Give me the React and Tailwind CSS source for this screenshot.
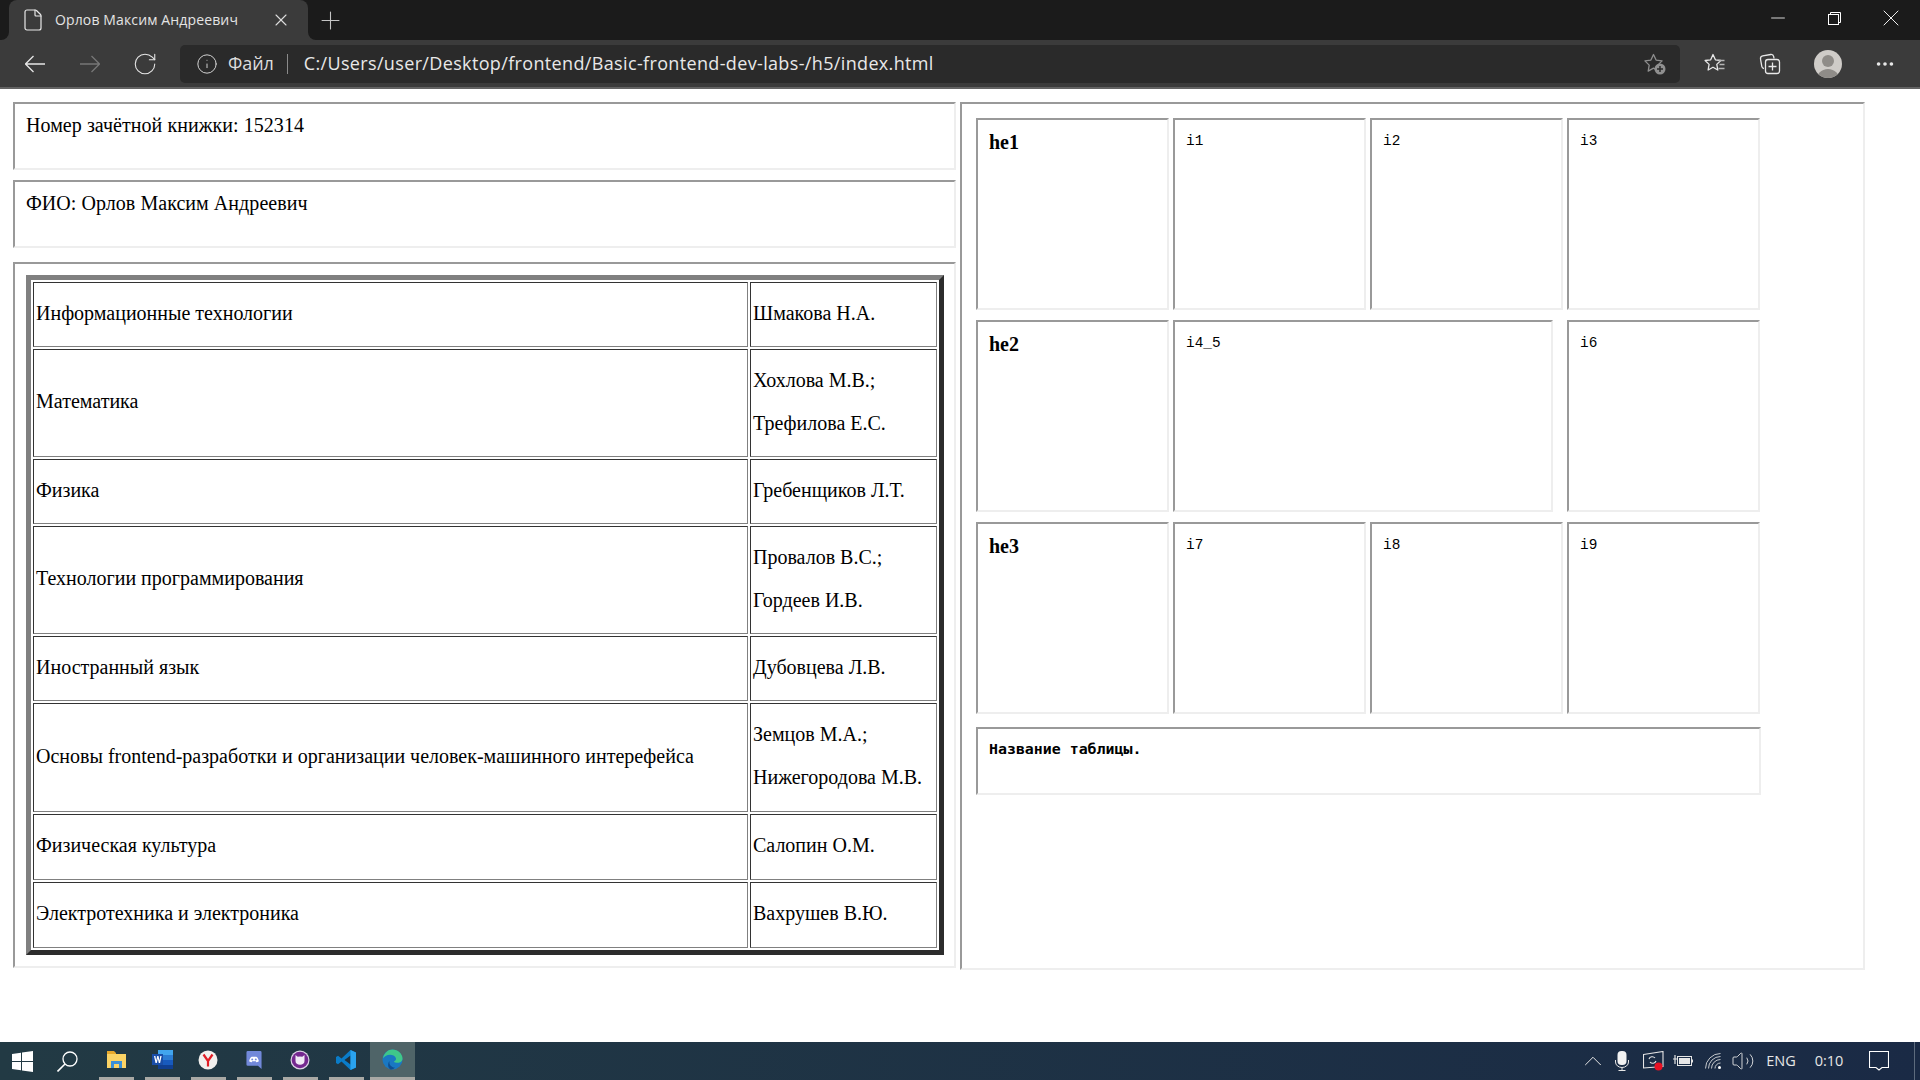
import { X, Plus, Minus, RotateCw, Info, File, MoreHorizontal, ChevronUp, Volume2 } from 'lucide-react';

const serif = "font-['Liberation_Serif','Times_New_Roman',serif]";
const inset = 'border-2 border-t-[#999999] border-l-[#999999] border-r-[#eeeeee] border-b-[#eeeeee]';
const cellBorder = 'border border-t-[#333333] border-l-[#333333] border-r-[#808080] border-b-[#808080]';

const rows = [
  { subject: 'Информационные технологии', teachers: ['Шмакова Н.А.'], height: 'h-[65px]' },
  { subject: 'Математика', teachers: ['Хохлова М.В.;', 'Трефилова Е.С.'], height: 'h-[108px]' },
  { subject: 'Физика', teachers: ['Гребенщиков Л.Т.'], height: 'h-[65px]' },
  { subject: 'Технологии программирования', teachers: ['Провалов В.С.;', 'Гордеев И.В.'], height: 'h-[108px]' },
  { subject: 'Иностранный язык', teachers: ['Дубовцева Л.В.'], height: 'h-[65px]' },
  { subject: 'Основы frontend-разработки и организации человек-машинного интерефейса', teachers: ['Земцов М.А.;', 'Нижегородова М.В.'], height: 'h-[109px]' },
  { subject: 'Физическая культура', teachers: ['Салопин О.М.'], height: 'h-[66px]' },
  { subject: 'Электротехника и электроника', teachers: ['Вахрушев В.Ю.'], height: 'h-[66px]' },
];

function TitleBar() {
  return (
    <div className="h-10 bg-[#3b3b3b] flex text-white shrink-0">
      <div className="w-[9px] bg-[#1b1b1b] rounded-br-lg" />
      <div className="w-[299px] bg-[#1b1b1b]">
        <div className="h-10 bg-[#3b3b3b] rounded-t-lg flex items-center pl-[12px]">
          <File size={24} strokeWidth={1.2} className="text-[#e8e8e8]" />
          <span className="ml-[10px] w-[216px] pb-px text-[14px] text-[#e4e4e4] font-['Open_Sans',sans-serif] tracking-[0.13px]">Орлов Максим Андреевич</span>
          <X size={20} strokeWidth={1.3} className="text-[#dddddd]" />
        </div>
      </div>
      <div className="flex-1 bg-[#1b1b1b] rounded-bl-lg flex items-start">
        <Plus size={29} strokeWidth={0.9} className="ml-[8px] mt-[6px] text-[#c4c4c4]" />
        <div className="ml-auto flex items-start">
          <div className="w-[56px] h-9 flex items-center justify-center"><Minus size={22} strokeWidth={0.9} /></div>
          <div className="w-[56px] h-9 flex items-center justify-center">
            <svg width="13" height="13" viewBox="0 0 13 13" fill="none" stroke="#ffffff">
              <rect x="0.5" y="2.5" width="10" height="10" />
              <path d="M2.5 2.5V0.5H12.5V10.5H10.5" />
            </svg>
          </div>
          <div className="w-[58px] h-9 flex items-center justify-center"><X size={28} strokeWidth={0.8} /></div>
        </div>
      </div>
    </div>
  );
}

function ToolBar() {
  return (
    <div className="h-[49px] bg-[#3b3b3b] border-b-2 border-[#636363] flex items-start shrink-0 text-white">
      <div className="w-[180px] h-[47px] flex items-center pl-[25px]">
        <svg width="20" height="20" viewBox="0 0 20 20" fill="none" stroke="#e6e6e6" strokeWidth="1.300">
          <path d="M.5 10H20M8.500 2L.5 10l8 8" />
        </svg>
        <svg width="20" height="20" viewBox="0 0 20 20" className="ml-[35px]" fill="none" stroke="#777777" strokeWidth="1.300">
          <path d="M19.500 10H0M11.500 2l8 8-8 8" />
        </svg>
        <RotateCw size={26} strokeWidth={1} className="ml-[32px] text-[#e6e6e6]" />
      </div>
      <div className="mt-[5px] w-[1500px] h-[38px] bg-[#2a2a2a] rounded-[5px] flex items-center pl-[16px] text-[18px] font-['Open_Sans',sans-serif] tracking-[0.35px]">
        <Info size={22} strokeWidth={1} className="text-[#e0e0e0]" />
        <span className="ml-[10px] pb-[2px] text-[#dcdcdc] tracking-[-0.1px]">Файл</span>
        <span className="ml-[13px] w-px h-5 bg-[#8a8a8a]" />
        <span className="ml-[16px] pb-[2px] text-[#e8e8e8]">C:/Users/user/Desktop/frontend/Basic-frontend-dev-labs-/h5/index.html</span>
        <svg width="24" height="24" viewBox="0 0 24 24" className="ml-auto mr-[13px]" fill="none">
          <path d="M10.500 2.500l2.600 5.600 6 .8-4.400 4.200 1 6-5.200-3-5.300 3 1-6-4.300-4.200 6-.8z" stroke="#8f8f8f" strokeWidth="1.300" strokeLinejoin="round" />
          <circle cx="17" cy="17" r="5.500" fill="#8f8f8f" />
          <path d="M17 14v6M14 17h6" stroke="#2a2a2a" strokeWidth="1.500" />
        </svg>
      </div>
      <svg width="24" height="24" viewBox="0 0 24 24" className="ml-[23px] mt-[12px]" fill="none" stroke="#e8e8e8" strokeWidth="1.300">
        <path d="M10 2.500l2.400 5.300 5.400.7-4 3.900 1 5.600-4.800-2.800-4.900 2.800 1-5.600-4-3.900 5.600-.7z" strokeLinejoin="round" />
        <path d="M15.500 8.500h6M16.500 12.500h5M15.500 16.500h6" stroke="#b5b5b5" />
      </svg>
      <svg width="24" height="24" viewBox="0 0 24 24" className="ml-[31px] mt-[12px]" fill="none" stroke="#e8e8e8" strokeWidth="1.300">
        <path d="M6 16.500c-1.200-.2-2-1-2.200-2.200L2.500 7C2.300 5.300 3.200 4.200 4.700 3.900l8-1.400c1.500-.2 2.700.7 3 2.200l.3 1.800" />
        <rect x="7.500" y="7.500" width="14" height="14" rx="2.500" />
        <path d="M14.500 10.500v8M10.500 14.500h8" />
      </svg>
      <div className="ml-[32px] mt-[10px] w-[28px] h-[28px] rounded-full bg-[#cfccc8] overflow-hidden">
        <div className="mx-auto mt-[5px] w-[12px] h-[12px] rounded-full bg-[#8f8c88]" />
        <div className="mx-auto mt-[2px] w-[24px] h-[14px] rounded-t-full bg-[#8f8c88]" />
      </div>
      <MoreHorizontal size={22} strokeWidth={2} className="ml-[32px] mt-[13px] text-[#e8e8e8]" />
    </div>
  );
}

function GradesTable() {
  return (
    <table className={`border-separate border-spacing-[2px] w-[918px] border-[5px] border-t-[#808080] border-l-[#808080] border-r-[#2c2c2c] border-b-[#2c2c2c] ${serif} text-[20px] text-black table-fixed`}>
      <colgroup>
        <col className="w-[715px]" />
        <col className="w-[187px]" />
      </colgroup>
      <tbody>
        {rows.map((row) => (
          <tr key={row.subject} className={row.height}>
            <td className={`${cellBorder} pl-[2px] pb-[4px] align-middle`}>{row.subject}</td>
            <td className={`${cellBorder} pl-[2px] pb-[3px] align-middle`}>
              {row.teachers.map((t) => (
                <div key={t} className="leading-[43px]">{t}</div>
              ))}
            </td>
          </tr>
        ))}
      </tbody>
    </table>
  );
}

function GridCell({ label, head, className = '' }) {
  return (
    <div className={`${inset} h-[192px] pl-[11px] ${head ? `pt-[7px] font-bold text-[20px] ${serif}` : "pt-[11px] text-[14.4px] font-['Liberation_Mono',monospace] leading-[20px]"} ${className}`}>
      {label}
    </div>
  );
}

function TaskIcon({ children }) {
  return (
    <div className="w-[46px] flex flex-col items-center">
      <div className="flex-1 flex items-center justify-center">{children}</div>
      <div className="w-[35px] h-[3px] bg-[#a9a9a5]" />
    </div>
  );
}

function TaskbarIcons() {
  return (
    <div className="flex items-stretch h-full">
      <div className="w-[44px] flex items-center justify-center">
        <svg width="21" height="21" viewBox="0 0 21 21" fill="#ffffff">
          <path d="M0 3l9-1.300V10H0zM10 1.500L21 0v10H10zM0 11h9v8.300L0 18zM10 11h11v10l-11-1.500z" />
        </svg>
      </div>
      <div className="w-[46px] mr-[3px] flex items-center justify-center">
        <svg width="21" height="21" viewBox="0 0 21 21" fill="none" stroke="#ffffff" strokeWidth="1.300">
          <circle cx="13" cy="8" r="7" />
          <path d="M8 13L.5 20.500" strokeWidth="1.600" />
        </svg>
      </div>
      <TaskIcon>
        <svg width="19" height="17" viewBox="0 0 19 17">
          <path d="M0 0h7l2 2v2H0z" fill="#e8a92c" />
          <path d="M0 3h19v14H0z" fill="#fbd365" />
          <path d="M4 17v-7h11v7h-3v-4H7v4z" fill="#3a8fd9" />
        </svg>
      </TaskIcon>
      <TaskIcon>
        <svg width="21" height="19" viewBox="0 0 21 19">
          <path d="M6 0h15v19H6z" fill="#2b7cd3" />
          <path d="M6 0h15v5H6z" fill="#41a5ee" />
          <path d="M6 10h15v5H6z" fill="#185abd" />
          <path d="M6 15h15v4H6z" fill="#103f91" />
          <path d="M0 4h11v11H0z" fill="#1a4ea8" />
          <path d="M2 6l1.500 7h1.300l1-4.500 1 4.500h1.300l1.500-7H8.300l-.8 4.500-1-4.500H5.200l-1 4.500L3.400 6z" fill="#ffffff" />
        </svg>
      </TaskIcon>
      <TaskIcon>
        <svg width="20" height="20" viewBox="0 0 20 20">
          <circle cx="10" cy="10" r="9.500" fill="#f2f0ee" />
          <path d="M5.500 4.500L10 11l4.500-6.500M10 11v5.500" stroke="#e01e26" strokeWidth="2.200" fill="none" />
        </svg>
      </TaskIcon>
      <TaskIcon>
        <svg width="16" height="18" viewBox="0 0 18 20">
          <path d="M2 0h14a1.500 1.500 0 0 1 1.500 1.500V20l-4-3.500H2A1.500 1.500 0 0 1 .5 15V1.500A1.500 1.500 0 0 1 2 0z" fill="#7289da" />
          <path d="M3.500 11.500c.5-3 1.500-4.500 2.500-5 1-.3 5-.3 6 0 1 .5 2 2 2.500 5-1 .8-2 1-3 1l-.5-1h-4l-.5 1c-1 0-2-.2-3-1z" fill="#ffffff" />
          <circle cx="7" cy="9.300" r="1.100" fill="#7289da" />
          <circle cx="11" cy="9.300" r="1.100" fill="#7289da" />
        </svg>
      </TaskIcon>
      <TaskIcon>
        <svg width="20" height="20" viewBox="0 0 20 20">
          <circle cx="10" cy="10" r="9.500" fill="#dcd3e6" />
          <circle cx="10" cy="10" r="8.300" fill="#74288f" />
          <path d="M5.500 5l2.200 1.800a7 7 0 0 1 4.600 0L14.500 5v6c0 2.500-2 3.800-4.500 3.800S5.500 13.500 5.500 11z" fill="#f0e9f5" />
        </svg>
      </TaskIcon>
      <TaskIcon>
        <svg width="20" height="20" viewBox="0 0 20 20">
          <path d="M14.500 0L20 2.500v15L14.500 20 5.500 11.500 2 14.200 0 13V7l2-1.200 3.500 2.700z" fill="#0a7cc8" />
          <path d="M14.500 5.500L8.500 10l6 4.500z" fill="#1e2f3a" />
          <path d="M14.500 0L20 2.500v15L14.500 20z" fill="#2aa3ef" />
        </svg>
      </TaskIcon>
      <div className="w-[45px] ml-[1px] bg-[#4f6468] border-b-[3px] border-[#a9a9a5] flex items-center justify-center">
        <svg width="21" height="21" viewBox="0 0 22 22">
          <circle cx="11" cy="11" r="10.500" fill="#1a78c2" />
          <path d="M1 10C2 4 6.500 .5 11 .5c5.500 0 10.500 4.500 10.500 9.500 0 3-2.500 4.500-5 4.500-2 0-3.500-.5-4-1.500 2-.5 2.500-2 2-3.500C13.500 7 11 6 8.500 6 5 6 2 8 1 10z" fill="#3fc78a" />
          <path d="M9 21.500C6 19.500 5.500 15 8 12.500c-1 3 1 6.500 5.500 7-1 1.500-3 2.300-4.500 2z" fill="#0f4f93" />
        </svg>
      </div>
    </div>
  );
}

function Tray() {
  return (
    <div className="ml-auto flex items-center h-full text-[#e6e6e6] text-[14.5px] font-['Open_Sans',sans-serif]">
      <div className="w-[30px] flex justify-center"><ChevronUp size={32} strokeWidth={0.8} /></div>
      <div className="w-[28px] flex justify-center">
        <svg width="14" height="20" viewBox="0 0 14 20" fill="none" stroke="#e6e6e6">
          <rect x="2.500" y="0" width="9" height="14" rx="4" fill="#f2f2f2" stroke="none" />
          <path d="M.5 9v2a6.500 5.500 0 0 0 13 0V9M7 16.500V19.500M3.500 19.500h7" />
        </svg>
      </div>
      <div className="w-[34px] flex justify-center">
        <svg width="21" height="20" viewBox="0 0 21 20" fill="none" stroke="#e6e6e6" strokeWidth="1.100">
          <path d="M.5 3.500L20 .5v15L.5 17z" />
          <path d="M6 8a3.500 3.500 0 0 1 6-1M13 10a3.500 3.500 0 0 1-6 1" />
          <circle cx="15.500" cy="15.500" r="4" fill="#e81123" stroke="none" />
        </svg>
      </div>
      <div className="w-[26px] flex justify-center">
        <svg width="20" height="14" viewBox="0 0 20 14" fill="none" stroke="#e6e6e6">
          <rect x="4.500" y="2.500" width="14" height="9" strokeWidth="1" />
          <rect x="6" y="4" width="11" height="6" fill="#e6e6e6" stroke="none" />
          <path d="M19.500 5.500v3M0 5h4M2 1v4M2 5v5" strokeWidth="1.200" />
        </svg>
      </div>
      <div className="w-[34px] flex justify-center">
        <svg width="16" height="16" viewBox="0 0 16 16" fill="none" stroke="#c4c8cc" strokeWidth="1">
          <path d="M.5 15.500A15 15 0 0 1 15.500 .5M3.500 15.500A12 12 0 0 1 15.500 3.500M6.500 15.500a9 9 0 0 1 9-9M10 15.500a5.500 5.500 0 0 1 5.500-5.500" />
          <circle cx="14.500" cy="14.500" r="1.500" fill="#ffffff" stroke="none" />
        </svg>
      </div>
      <div className="w-[26px] flex justify-center"><Volume2 size={24} strokeWidth={0.9} /></div>
      <span className="w-[50px] text-center">ENG</span>
      <span className="w-[46px] text-center">0:10</span>
      <div className="w-[54px] flex justify-center">
        <svg width="20" height="20" viewBox="0 0 20 20" fill="none" stroke="#ffffff" strokeWidth="1.100">
          <path d="M.5 .5h19v16h-6.500l-3 2.500-3-2.500H.5z" />
        </svg>
      </div>
      <div className="ml-[8px] mr-[5px] w-px h-full bg-[#5d6b7d]" />
    </div>
  );
}

export default function App() {
  return (
    <div className="w-[1920px] h-[1080px] flex flex-col overflow-hidden bg-white">
      <TitleBar />
      <ToolBar />
      <main className="flex-1 flex items-start pl-[13px] pt-[13px] gap-[4px]">
        <div className="w-[943px] flex flex-col">
          <div className={`${inset} h-[68px] pl-[11px] pt-[6px] mb-[10px] text-[20px] tracking-[0.05px] text-black ${serif}`}>Номер зачётной книжки: 152314</div>
          <div className={`${inset} h-[68px] pl-[11px] pt-[6px] mb-[14px] text-[20px] tracking-[0.05px] text-black ${serif}`}>ФИО: Орлов Максим Андреевич</div>
          <div className={`${inset} h-[706px] pl-[11px] pt-[11px]`}>
            <GradesTable />
          </div>
        </div>
        <div className={`${inset} w-[905px] h-[868px] pl-[14px] pt-[14px]`}>
          <div className="w-[785px] grid grid-cols-[repeat(4,193px)] gap-x-[4px] gap-y-[10px] text-black">
            <GridCell head label="he1" />
            <GridCell label="i1" />
            <GridCell label="i2" />
            <GridCell label="i3" />
            <GridCell head label="he2" />
            <GridCell label="i4_5" className="col-span-2 w-[380px]" />
            <GridCell label="i6" />
            <GridCell head label="he3" />
            <GridCell label="i7" />
            <GridCell label="i8" />
            <GridCell label="i9" />
          </div>
          <div className={`${inset} mt-[13px] w-[785px] h-[68px] pl-[11px] pt-[10px] text-[14.9px] font-bold leading-[20px] text-black font-['DejaVu_Sans_Mono',monospace]`}>Название таблицы.</div>
        </div>
      </main>
      <footer className="h-[38px] shrink-0 flex bg-gradient-to-r from-[#223a44] to-[#1a2a45]">
        <TaskbarIcons />
        <Tray />
      </footer>
    </div>
  );
}
